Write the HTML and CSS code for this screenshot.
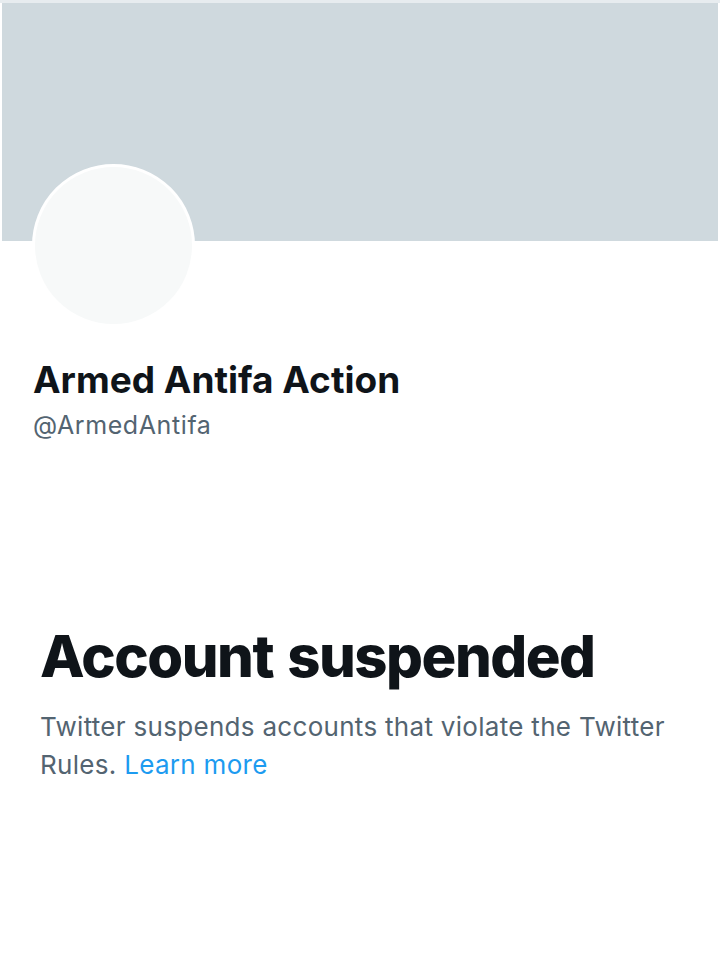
FILE: index.html
```
<!DOCTYPE html>
<html>
<head>
<meta charset="utf-8">
<link rel="stylesheet" href="styles.css">
</head>
<body>
<div class="page">
  <div class="banner"></div>
  <div class="profile">
    <div class="avatar-row"><div class="avatar"></div></div>
    <div class="name">Armed Antifa Action</div>
    <div class="handle">@ArmedAntifa</div>
  </div>
  <div class="suspended">
    <h1 class="title">Account suspended</h1>
    <p class="desc">Twitter suspends accounts that violate the Twitter Rules. <a class="link" href="#">Learn more</a></p>
  </div>
</div>
</body>
</html>
```
FILE: styles.css
```
html, body { margin: 0; padding: 0; background: #fff; }
body { font-family: Inter, "Noto Sans", sans-serif; color: #0f1419; }
.page { width: 720px; height: 966px; overflow: hidden; padding-top: 3px; box-sizing: border-box; background: linear-gradient(#e7ecef, #e7ecef) top/100% 3px no-repeat; }
.banner { height: 238px; margin: 0 2px; background: #cfd9de; }
.profile { padding: 0 32px; display: flow-root; }
.avatar-row { display: flex; }
.avatar { width: 157px; height: 157px; border-radius: 50%; background: #f7f9f9; border: 3px solid #fff; margin-top: -77px; }
.name { font-size: 37px; font-weight: 700; line-height: 44px; margin-top: 31px; letter-spacing: 0; padding-left: 1px; }
.handle { font-size: 25px; color: #536471; line-height: 30px; margin-top: 8px; letter-spacing: 0.6px; padding-left: 1px; }
.suspended { padding: 0 40px; margin-top: 184px; }
.title { font-size: 58px; font-weight: 800; margin: 0; line-height: 64px; letter-spacing: -1.5px; word-spacing: 3px; }
.desc { font-size: 26px; color: #536471; line-height: 38px; margin: 20px 0 0; letter-spacing: 0.3px; }
.link { color: #1d9bf0; text-decoration: none; }
```
